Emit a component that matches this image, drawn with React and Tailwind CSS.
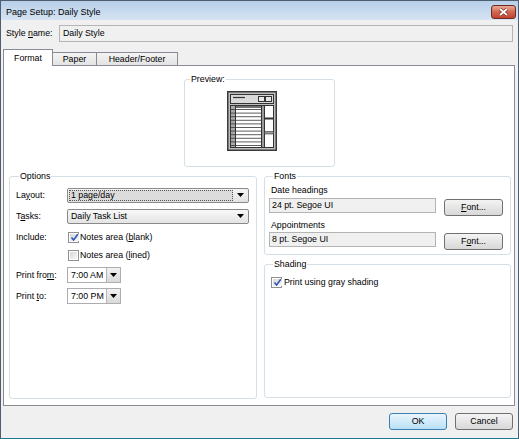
import React from "react";

function Arrow() {
  return (
    <svg width="7" height="4" viewBox="0 0 7 4">
      <polygon points="0,0 7,0 3.5,4" fill="#000" />
    </svg>
  );
}

function Check({ checked }) {
  return (
    <span className="w-[11px] h-[11px] border border-[#8e8f8f] bg-white p-[1px] flex shrink-0">
      <span className="flex-1 bg-gradient-to-br from-[#d8d8d8] to-[#f8f8f8] flex items-center justify-center">
        {checked && (
          <svg width="9" height="9" viewBox="0 0 9 9">
            <path d="M1.5 4.5 L3.6 7 L7.8 1.2" stroke="#2e56b5" strokeWidth="1.6" fill="none" />
          </svg>
        )}
      </span>
    </span>
  );
}

function U({ children }) {
  return <span className="underline underline-offset-[1px]">{children}</span>;
}

function TimeCombo({ value }) {
  return (
    <div className="w-[54px] h-[16px] border border-[#abadb3] bg-white flex items-center">
      <span className="flex-1 pl-[3px]">{value}</span>
      <span className="w-[14px] h-[14px] border-l border-[#b5b5b5] bg-gradient-to-b from-[#f2f2f2] to-[#d9d9d9] flex items-center justify-center">
        <Arrow />
      </span>
    </div>
  );
}

function Btn({ children, primary, className = "" }) {
  return (
    <div
      className={
        "h-[17px] rounded-[3px] border flex items-center justify-center " +
        (primary
          ? "border-[#3c7fb1] bg-gradient-to-b from-[#e9f5fc] to-[#b9e0f7] "
          : "border-[#707070] bg-gradient-to-b from-[#f4f4f4] to-[#d8d8d8] ") +
        className
      }
    >
      {children}
    </div>
  );
}

function PreviewIcon() {
  const rows = [];
  for (let i = 0; i < 11; i++) rows.push(18.5 + i * 3.6);
  return (
    <svg width="50" height="60" viewBox="0 0 50 60">
      <rect x="0.75" y="0.75" width="48.5" height="58.5" fill="#bdbdbd" stroke="#3a3a3a" strokeWidth="1.5" />
      <rect x="3.5" y="3.5" width="43" height="9" fill="#d9d9d9" stroke="#333" />
      <line x1="6" y1="6.5" x2="18" y2="6.5" stroke="#333" strokeWidth="1.2" />
      <rect x="31.5" y="5.5" width="6" height="5" fill="#e6e6e6" stroke="#333" />
      <rect x="38.5" y="5.5" width="6" height="5" fill="#e6e6e6" stroke="#333" />
      <rect x="3.5" y="14.5" width="5" height="42" fill="#a9a9a9" stroke="#333" />
      {rows.map((y, i) => (
        <line key={"l" + i} x1="3.5" y1={y} x2="8.5" y2={y} stroke="#333" strokeWidth="0.8" />
      ))}
      <rect x="8.5" y="14.5" width="26" height="42" fill="#fff" stroke="#333" />
      <line x1="9" y1="16" x2="34" y2="16" stroke="#333" strokeWidth="1.4" />
      {rows.map((y, i) => (
        <line key={"r" + i} x1="9" y1={y} x2="34" y2={y} stroke="#333" strokeWidth="0.8" />
      ))}
      <rect x="34.5" y="14.5" width="3" height="42" fill="#9a9a9a" stroke="#333" />
      <rect x="37.5" y="14.5" width="9" height="42" fill="#fff" stroke="#333" />
      <rect x="37.5" y="26.5" width="9" height="2" fill="#333" />
      <rect x="37.5" y="40.5" width="9" height="2.5" fill="#9a9a9a" stroke="#333" strokeWidth="0.6" />
    </svg>
  );
}

export default function App() {
  return (
    <div className="w-[519px] h-[439px] bg-[#f0f0f0] border border-[#4f5d6c] border-b-[#1d7694] flex flex-col text-[8.8px] leading-[11px] text-black [font-family:'Liberation_Sans',Arial,sans-serif] overflow-hidden">
      {/* Title bar */}
      <div className="h-[19px] shrink-0 flex items-center justify-between pl-[5px] pr-[2px] bg-gradient-to-b from-[#b7cfe9] to-[#d6e4f3]">
        <span className="text-[9px] mt-[3px]">Page Setup: Daily Style</span>
        <div className="w-[25px] h-[14px] mt-[2px] rounded-[3px] border border-[#6d2c22] bg-gradient-to-b from-[#e9a998] via-[#d26550] to-[#c0432f] flex items-center justify-center">
          <svg width="11" height="8" viewBox="0 0 11 8">
            <path d="M2 1 L9 7 M9 1 L2 7" stroke="#6a2418" strokeWidth="3" />
            <path d="M2 1 L9 7 M9 1 L2 7" stroke="#fff" strokeWidth="1.8" />
          </svg>
        </div>
      </div>

      {/* Style name */}
      <div className="mt-[5px] px-[5px] flex items-center">
        <span className="w-[53px]">
          Style <U>n</U>ame:
        </span>
        <div className="flex-1 h-[17px] border border-[#b4b4b4] bg-[#f0f0f0] flex items-center pl-[3px]">
          Daily Style
        </div>
      </div>

      {/* Tabs */}
      <div className="mt-[7px] pl-[2px] flex items-start h-[16px]">
        <div className="relative z-10 w-[50px] h-[17px] border border-b-0 border-[#898c95] bg-white flex items-center justify-center pt-[1px]">
          Format
        </div>
        <div className="mt-[3px] w-[44px] h-[13px] border border-l-0 border-b-0 border-[#898c95] bg-gradient-to-b from-[#f4f4f4] to-[#e3e3e3] flex items-center justify-center">
          Paper
        </div>
        <div className="mt-[3px] w-[81px] h-[13px] border border-l-0 border-b-0 border-[#898c95] bg-gradient-to-b from-[#f4f4f4] to-[#e3e3e3] flex items-center justify-center">
          Header/Footer
        </div>
      </div>

      {/* Tab panel */}
      <div className="ml-[2px] mr-[3px] h-[341px] border border-[#898c95] bg-white flex flex-col">
        {/* Preview */}
        <fieldset className="mt-[8px] ml-[180px] w-[151px] h-[93px] border border-[#d5dfe5] rounded-[3px]">
          <legend className="ml-[5px] px-[1px] leading-[11px]">Preview:</legend>
          <div className="mt-[6px] ml-[42px]">
            <PreviewIcon />
          </div>
        </fieldset>

        <div className="mt-[4px] pl-[5px] pr-[3px] flex gap-[7px]">
          {/* Options */}
          <fieldset className="w-[248px] h-[228px] border border-[#d5dfe5] rounded-[3px] pl-[6px]">
            <legend className="ml-[3px] px-[1px] leading-[11px]">Options</legend>

            <div className="mt-[5px] h-[16px] flex items-center">
              <span className="w-[51px]">
                La<U>y</U>out:
              </span>
              <div className="w-[182px] h-[15px] rounded-[2px] border border-[#8a8a8a] bg-gradient-to-b from-[#f5f5f5] to-[#e2e2e2] flex items-center p-[1px]">
                <div className="flex-1 h-full border border-dotted border-[#555] bg-[#dcdcdc] flex items-center pl-[1px]">
                  1 page/day
                </div>
                <span className="w-[14px] flex justify-center">
                  <Arrow />
                </span>
              </div>
            </div>

            <div className="mt-[5px] h-[16px] flex items-center">
              <span className="w-[51px]">
                T<U>a</U>sks:
              </span>
              <div className="w-[182px] h-[15px] rounded-[2px] border border-[#8a8a8a] bg-gradient-to-b from-[#f8f8f8] to-[#e4e4e4] flex items-center">
                <span className="flex-1 pl-[3px]">Daily Task List</span>
                <span className="w-[15px] flex justify-center">
                  <Arrow />
                </span>
              </div>
            </div>

            <div className="mt-[5px] h-[16px] flex items-center">
              <span className="w-[51px]">Include:</span>
              <div className="flex items-center gap-[1px] ml-[1px]">
                <Check checked />
                <span>
                  Notes area (<U>b</U>lank)
                </span>
              </div>
            </div>

            <div className="mt-[2px] h-[16px] flex items-center">
              <span className="w-[51px]"></span>
              <div className="flex items-center gap-[1px] ml-[1px]">
                <Check />
                <span>
                  Notes area (<U>l</U>ined)
                </span>
              </div>
            </div>

            <div className="mt-[4px] h-[16px] flex items-center">
              <span className="w-[51px]">
                Print fro<U>m</U>:
              </span>
              <TimeCombo value="7:00 AM" />
            </div>

            <div className="mt-[5px] h-[16px] flex items-center">
              <span className="w-[51px]">
                Print <U>t</U>o:
              </span>
              <TimeCombo value="7:00 PM" />
            </div>
          </fieldset>

          {/* Right column */}
          <div className="w-[247px] flex flex-col gap-[4px]">
            <fieldset className="h-[84px] border border-[#d5dfe5] rounded-[3px] pl-[4px]">
              <legend className="ml-[4px] px-[1px] leading-[11px]">Fonts</legend>
              <div className="mt-[3px] ml-[2px]">Date headings</div>
              <div className="mt-[2px] flex items-start">
                <div className="w-[167px] h-[15px] border border-[#b4b4b4] bg-[#f0f0f0] flex items-center pl-[2px]">
                  24 pt. Segoe UI
                </div>
                <Btn className="ml-[8px] mt-[1px] w-[59px]">
                  <span>
                    <U>F</U>ont...
                  </span>
                </Btn>
              </div>
              <div className="mt-[4px] ml-[2px]">Appointments</div>
              <div className="mt-[1px] flex items-start">
                <div className="w-[167px] h-[15px] border border-[#b4b4b4] bg-[#f0f0f0] flex items-center pl-[2px]">
                  8 pt. Segoe UI
                </div>
                <Btn className="ml-[8px] mt-[1px] w-[59px]">
                  <span>
                    F<U>o</U>nt...
                  </span>
                </Btn>
              </div>
            </fieldset>

            <fieldset className="h-[139px] border border-[#d5dfe5] rounded-[3px] pl-[6px]">
              <legend className="ml-[2px] px-[1px] leading-[11px]">Shading</legend>
              <div className="mt-[7px] flex items-center gap-[2px]">
                <Check checked />
                <span>Print using gray shading</span>
              </div>
            </fieldset>
          </div>
        </div>
      </div>

      {/* Bottom buttons */}
      <div className="mt-[7px] mr-[5px] flex justify-end gap-[8px]">
        <Btn primary className="w-[58px]">
          OK
        </Btn>
        <Btn className="w-[58px]">Cancel</Btn>
      </div>
    </div>
  );
}
